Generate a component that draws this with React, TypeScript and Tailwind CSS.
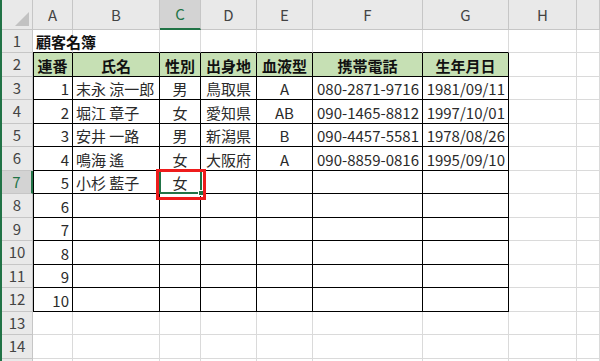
import React from "react";

const cols = ["", "A", "B", "C", "D", "E", "F", "G", "H", ""];
const widths = [31, 40, 87, 41, 56, 56, 110, 86, 68, 23];
const heights = [23, 24, 23, 24, 23, 24, 23, 24, 23, 24, 23, 24, 23, 24];

const head = ["連番", "氏名", "性別", "出身地", "血液型", "携帯電話", "生年月日"];
const people: string[][] = [
  ["1", "末永 涼一郎", "男", "鳥取県", "A", "080-2871-9716", "1981/09/11"],
  ["2", "堀江 章子", "女", "愛知県", "AB", "090-1465-8812", "1997/10/01"],
  ["3", "安井 一路", "男", "新潟県", "B", "090-4457-5581", "1978/08/26"],
  ["4", "鳴海 遙", "女", "大阪府", "A", "090-8859-0816", "1995/09/10"],
  ["5", "小杉 藍子", "女", "", "", "", ""],
  ["6"], ["7"], ["8"], ["9"], ["10"],
];

// row r (1..14), col c (1..9)
const inTable = (r: number, c: number) => r >= 2 && r <= 12 && c >= 1 && c <= 7;

function align(c: number) {
  if (c === 1) return "justify-end pr-[3px]";
  if (c === 2) return "justify-start pl-[3px]";
  if (c === 6 || c === 7) return "justify-end pr-[3px]";
  return "justify-center";
}

function Cell({ r, c }: { r: number; c: number }) {
  let text = "";
  let bold = false;
  if (r === 1 && c === 1) { text = "顧客名簿"; bold = true; }
  if (r === 2 && c <= 7) { text = head[c - 1]; bold = true; }
  if (r >= 3 && r <= 12 && c <= 7) text = people[r - 3][c - 1] ?? "";

  const rightDark = inTable(r, c) || inTable(r, c + 1);
  const bottomDark = inTable(r, c) || inTable(r + 1, c);
  const green = r === 2 && c <= 7;
  const active = r === 7 && c === 3;

  return (
    <div
      className={[
        "relative flex items-center border-r border-b text-[15px] leading-none",
        rightDark ? "border-r-black" : "border-r-[#dadada]",
        bottomDark ? "border-b-black" : "border-b-[#dadada]",
        green ? "bg-[#c6e0b4]" : "bg-transparent",
        c === 1 && inTable(r, c) ? "shadow-[inset_1px_0_0_#000]" : "",
        bold ? "font-bold text-[#111]" : "text-[#2a2a2a]",
        active ? "z-20" : "",
        r === 2 ? "justify-center" : r === 1 ? "justify-start pl-[3px]" : align(c),
      ].join(" ")}
    >
      <span className="pt-[1px] whitespace-nowrap shrink-0">{text}</span>
      {active && (
        <>
          <div className="absolute left-[-1px] top-[-1px] w-[43px] h-[24px] border-2 border-[#217346]" />
          <div className="absolute right-[-4px] bottom-[-3px] w-[6px] h-[6px] bg-[#217346] border border-white" />
          <div className="absolute left-[-4px] top-[-2px] w-[50px] h-[31px] border-[3px] border-[#ee1c1c]" />
        </>
      )}
    </div>
  );
}

export default function App() {
  return (
    <div className="w-[600px] h-[361px] overflow-hidden bg-white flex font-['Noto_Sans_CJK_JP',sans-serif]">
      <div className="w-[2px] h-full bg-[#217346]" />
      <div
        className="grid"
        style={{
          gridTemplateColumns: widths.map((w) => `${w}px`).join(" "),
          gridTemplateRows: `30px ${heights.map((h) => `${h}px`).join(" ")} 10px`,
        }}
      >
        {/* column headers */}
        <div className="relative bg-[#e9e9e9] border-r border-b border-[#c6c6c6]">
          <div className="absolute right-[3px] bottom-[3px] w-0 h-0 border-l-[14px] border-l-transparent border-b-[14px] border-b-[#c2c2c2]" />
        </div>
        {cols.slice(1).map((name, i) =>
          i + 1 === 3 ? (
            <div
              key={i}
              className="flex items-center justify-center bg-[#d3d3d3] border-r border-r-[#c6c6c6] border-b-2 border-b-[#217346] text-[#217346] text-[15px] pt-[1px]"
            >
              {name}
            </div>
          ) : (
            <div
              key={i}
              className="flex items-center justify-center bg-[#e9e9e9] border-r border-b border-[#c6c6c6] text-[#444] text-[15px] pt-[1px]"
            >
              {name}
            </div>
          )
        )}
        {heights.map((_, ri) => {
          const r = ri + 1;
          return (
            <React.Fragment key={r}>
              {r === 7 ? (
                <div className="flex items-center justify-center bg-[#d3d3d3] border-r-2 border-r-[#217346] border-b border-b-[#c6c6c6] text-[#217346] text-[15px]">
                  {r}
                </div>
              ) : (
                <div className="flex items-center justify-center bg-[#e9e9e9] border-r border-b border-[#c6c6c6] text-[#444] text-[15px]">
                  {r}
                </div>
              )}
              {cols.slice(1).map((_, ci) => (
                <Cell key={ci} r={r} c={ci + 1} />
              ))}
            </React.Fragment>
          );
        })}
        <div className="bg-[#e9e9e9] border-r border-[#c6c6c6]" />
        {cols.slice(1).map((_, i) => (
          <div key={i} className="border-r border-[#dadada]" />
        ))}
      </div>
    </div>
  );
}
